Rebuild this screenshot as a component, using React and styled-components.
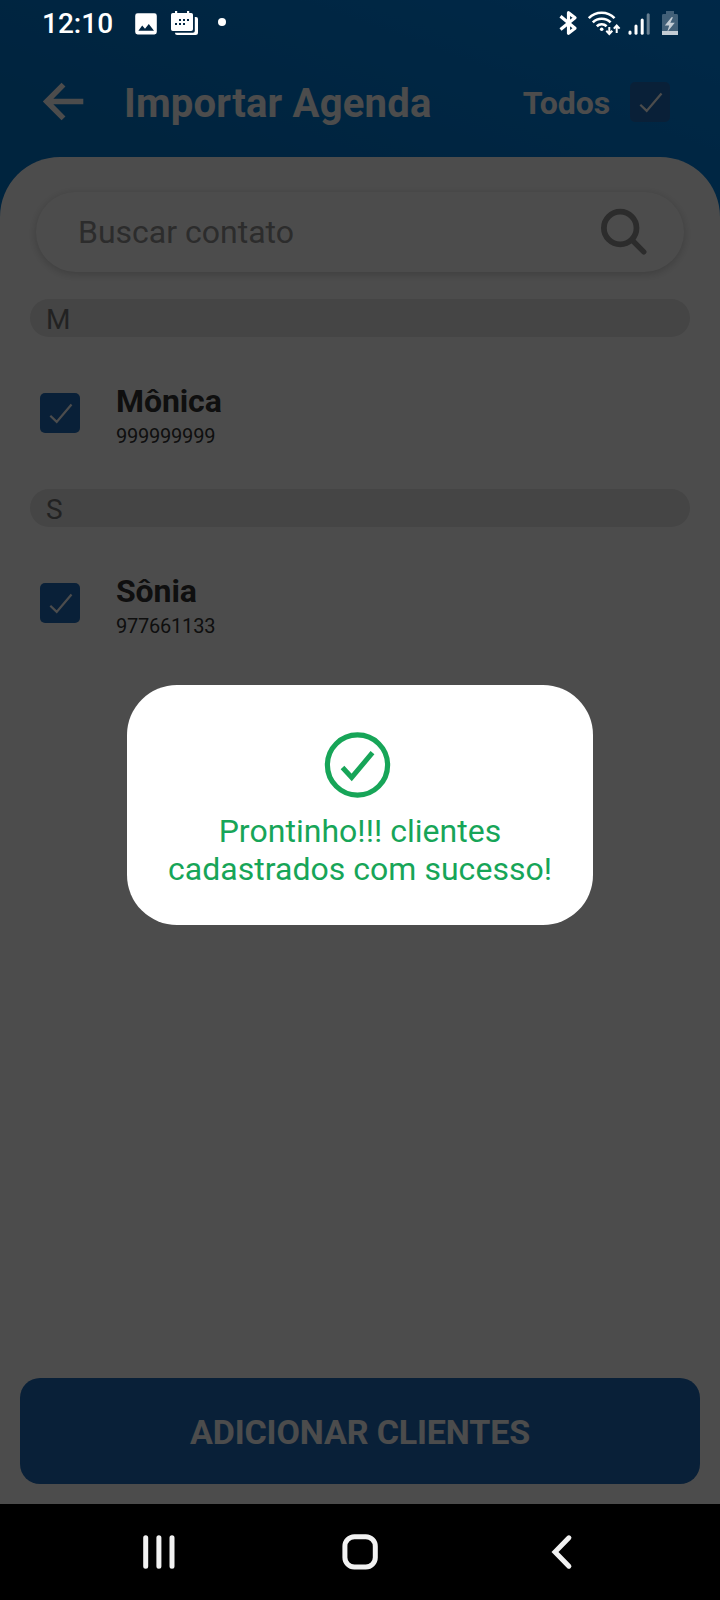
import React, { useState } from "react";
import styled, { createGlobalStyle } from "styled-components";

const GlobalStyle = createGlobalStyle`
  * {
    box-sizing: border-box;
  }

  body {
    margin: 0;
    font-family: Roboto, "Liberation Sans", sans-serif;
    background-color: #000000;
  }
`;

const contactGroups = [
  { letter: "M", contacts: [{ name: "Mônica", phone: "999999999" }] },
  { letter: "S", contacts: [{ name: "Sônia", phone: "977661133" }] },
];

const CheckBox = ({ checked, onClick }) => (
  <CheckBoxButton onClick={onClick}>
    {checked && (
      <svg width="40" height="40" viewBox="0 0 40 40" fill="none">
        <path d="M10.3 22.8L16.7 28.9L31.5 11.5" stroke="#fff" strokeWidth="2.2" />
      </svg>
    )}
  </CheckBoxButton>
);

const StatusBar = () => (
  <StatusContainer>
    <Clock>12:10</Clock>
    <svg width="92" height="26" viewBox="0 0 92 26" fill="#fff">
      <path
        fillRule="evenodd"
        d="M2.6 3.3H19.4A2.4 2.4 0 0 1 21.8 5.7V22.1A2.4 2.4 0 0 1 19.4 24.5H2.6A2.4 2.4 0 0 1 .2 22.1V5.7A2.4 2.4 0 0 1 2.6 3.3ZM3.4 20.8H19L13.8 14L10 18.8L7.2 15.6Z"
      />
      <path
        fillRule="evenodd"
        d="M38 3H40V1H42.2V3H52V1H54.2V3H56.2A1.8 1.8 0 0 1 58 4.8V19.2A1.8 1.8 0 0 1 56.2 21H37.8A1.8 1.8 0 0 1 36 19.2V4.8A1.8 1.8 0 0 1 37.8 3ZM44 9V11H46V9ZM48 9V11H50V9ZM52 9V11H54V9ZM40 13V15H42V13ZM44 13V15H46V13ZM48 13V15H50V13Z"
      />
      <path d="M59.8 7H61A2 2 0 0 1 63 9V22.5A2.5 2.5 0 0 1 60.5 25H42A2 2 0 0 1 40 23V22.8H58A1.8 1.8 0 0 0 59.8 21Z" />
      <circle cx="87" cy="12" r="4" />
    </svg>
    <Spacer />
    <svg width="122" height="28" viewBox="0 0 122 28" fill="none" stroke="#fff">
      <path d="M2.5 7.2L17 19.3L10.5 24.3V3.7L17 8.7L2.5 20.5" strokeWidth="3.2" strokeLinejoin="round" />
      <g strokeWidth="2.6">
        <path d="M30.8 9.2A18 18 0 0 1 56.5 9.2" />
        <path d="M34.8 13.4A12.6 12.6 0 0 1 52.6 13.4" />
        <path d="M38.8 17.2A7 7 0 0 1 48.6 17.2" />
      </g>
      <circle cx="43.7" cy="20.3" r="1.8" fill="#fff" stroke="none" />
      <path d="M51.3 18V25M48.3 21.8L51.3 25L54.3 21.8M58.7 24V17M55.8 19.6L58.7 16.5L61.6 19.6" strokeWidth="2" />
      <g strokeWidth="3" strokeLinecap="round">
        <path d="M72 23V24.3" />
        <path d="M78 17V24.3" />
        <path d="M84.2 11V24.3" />
        <path d="M90.2 5.7V24.3" opacity=".4" />
      </g>
      <g stroke="none">
        <path d="M108 2H116V5H118.6A1.4 1.4 0 0 1 120 6.4V22H104V6.4A1.4 1.4 0 0 1 105.4 5H108Z" fill="#426078" />
        <path d="M104 22H120V26H104Z" fill="#c3ccd4" />
        <path d="M113.5 8.3L106.8 16.6H111.2L109.2 23L116.8 13.8H112.3L115 8.3Z" fill="#c3ccd4" />
      </g>
    </svg>
  </StatusContainer>
);

const NavBar = () => (
  <NavContainer>
    <NavButton>
      <svg width="36" height="40" viewBox="0 0 36 40" stroke="#f2f2f2" strokeWidth="5" strokeLinecap="round">
        <path d="M5.7 5.8V34.2M18.9 5.8V34.2M32 5.8V34.2" />
      </svg>
    </NavButton>
    <NavButton>
      <svg width="40" height="40" viewBox="0 0 40 40" fill="none" stroke="#f2f2f2" strokeWidth="5">
        <rect x="4.9" y="4.8" width="30.4" height="30.2" rx="9.5" />
      </svg>
    </NavButton>
    <NavButton>
      <svg width="36" height="40" viewBox="0 0 36 40" fill="none" stroke="#f2f2f2" strokeWidth="5" strokeLinecap="round">
        <path d="M24.9 5.8L11 20L24.9 34.2" />
      </svg>
    </NavButton>
  </NavContainer>
);

const App = () => {
  const [unselected, setUnselected] = useState([]);

  const toggleContact = (phone) => {
    setUnselected(
      unselected.includes(phone)
        ? unselected.filter((item) => item !== phone)
        : [...unselected, phone]
    );
  };

  const toggleAll = () => {
    const phones = contactGroups.flatMap((group) => group.contacts.map((contact) => contact.phone));
    setUnselected(unselected.length === 0 ? phones : []);
  };

  return (
    <>
      <GlobalStyle />
      <Screen>
        <Page>
          <StatusBar />
          <Header>
            <svg width="44" height="40" viewBox="0 0 44 40" fill="none" stroke="#fff" strokeWidth="5.5">
              <path d="M21.5 2.6L4.7 19.5L21.5 36.4M4.7 19.5H41.3" />
            </svg>
            <Title>Importar Agenda</Title>
            <SelectAll>Todos</SelectAll>
            <CheckBox checked={unselected.length === 0} onClick={toggleAll} />
          </Header>
          <Sheet>
            <SearchBar>
              <input placeholder="Buscar contato" />
              <svg width="48" height="48" viewBox="0 0 48 48" fill="none" stroke="#949494">
                <circle cx="20.2" cy="20" r="16.3" strokeWidth="5.8" />
                <path d="M32.5 32.5L43.8 43.8" strokeWidth="5.4" strokeLinecap="round" />
              </svg>
            </SearchBar>
            <ContactList>
              {contactGroups.map((group) => (
                <div key={group.letter}>
                  <GroupLetter>{group.letter}</GroupLetter>
                  {group.contacts.map((contact) => (
                    <ContactRow key={contact.phone}>
                      <CheckBox
                        checked={!unselected.includes(contact.phone)}
                        onClick={() => toggleContact(contact.phone)}
                      />
                      <ContactInfo>
                        <h3>{contact.name}</h3>
                        <span>{contact.phone}</span>
                      </ContactInfo>
                    </ContactRow>
                  ))}
                </div>
              ))}
            </ContactList>
            <AddButton>ADICIONAR CLIENTES</AddButton>
          </Sheet>
          <Overlay>
            <Modal>
              <svg width="80" height="80" viewBox="0 0 80 80" fill="none" stroke="#17a558">
                <circle cx="37.5" cy="40" r="30.1" strokeWidth="5.2" />
                <path d="M22.5 42.5L31.7 52.4L52.5 27.7" strokeWidth="5" />
              </svg>
              <p>Prontinho!!! clientes cadastrados com sucesso!</p>
            </Modal>
          </Overlay>
        </Page>
        <NavBar />
      </Screen>
    </>
  );
};

export default App;

const Screen = styled.div`
  display: grid;
  grid-template-rows: 1504px 96px;
  width: 720px;
  height: 1600px;
  overflow: hidden;
`;

const Page = styled.div`
  position: relative;
  display: flex;
  flex-direction: column;
  background: linear-gradient(200deg, #0088f0 0px, #0078d0 330px, #007ad8 100%);
`;

const StatusContainer = styled.div`
  position: relative;
  z-index: 2;
  display: flex;
  align-items: center;
  height: 46px;
  padding: 0 40px 0 42px;

  svg {
    margin-bottom: 1px;
  }
`;

const Clock = styled.span`
  width: 93px;
  color: #FFFFFF;
  font-size: 28px;
  font-weight: 500;
`;

const Spacer = styled.div`
  flex: 1;
`;

const Header = styled.div`
  display: flex;
  align-items: center;
  height: 111px;
  padding: 0 50px 0 42px;
  color: #FFFFFF;
`;

const Title = styled.h1`
  flex: 1;
  margin: 4px 0 0 38px;
  font-size: 40px;
  font-weight: 700;
  letter-spacing: .22px;
`;

const SelectAll = styled.span`
  margin: 2px 20px 0 0;
  font-size: 32px;
  font-weight: 700;
  letter-spacing: -.1px;
`;

const CheckBoxButton = styled.button`
  display: flex;
  width: 40px;
  height: 40px;
  padding: 0;
  border: none;
  border-radius: 5px;
  background-color: #216dbb;
  cursor: pointer;
`;

const Sheet = styled.div`
  flex: 1;
  display: flex;
  flex-direction: column;
  padding: 35px 20px 20px;
  border-radius: 60px 60px 0 0;
  background-color: #FFFFFF;
`;

const SearchBar = styled.div`
  display: flex;
  align-items: center;
  height: 80px;
  margin: 0 16px;
  padding: 0 36px 0 42px;
  border-radius: 40px;
  background-color: #FFFFFF;
  box-shadow: 0 2px 10px rgba(0, 0, 0, .2);

  input {
    flex: 1;
    min-width: 0;
    padding: 0;
    border: none;
    outline: none;
    background: transparent;
    font-family: inherit;
    font-size: 32px;

    &::placeholder {
      color: #949494;
      opacity: 1;
    }
  }
`;

const ContactList = styled.div`
  flex: 1;
  padding: 27px 10px 0;
`;

const GroupLetter = styled.div`
  height: 38px;
  padding: 2px 16px 0;
  border-radius: 19px;
  background-color: #e6e6e6;
  color: #747474;
  font-size: 28px;
  line-height: 38px;
`;

const ContactRow = styled.div`
  display: flex;
  align-items: center;
  gap: 36px;
  height: 152px;
  padding: 0 10px;
`;

const ContactInfo = styled.div`
  display: flex;
  flex-direction: column;
  gap: 4px;
  padding-top: 4px;

  h3 {
    margin: 0;
    color: #333333;
    font-size: 32px;
    font-weight: 700;
    line-height: 38px;
    letter-spacing: -.1px;
  }

  span {
    color: #333333;
    font-size: 20px;
    line-height: 24px;
    letter-spacing: -.22px;
  }
`;

const AddButton = styled.button`
  height: 106px;
  padding: 2px 0 0;
  border: none;
  border-radius: 20px;
  background-color: #216dbb;
  color: #FFFFFF;
  font-family: inherit;
  font-size: 34px;
  font-weight: 700;
  letter-spacing: -.12px;
  cursor: pointer;
`;

const Overlay = styled.div`
  position: absolute;
  inset: 0;
  z-index: 1;
  display: flex;
  justify-content: center;
  align-items: center;
  padding-top: 106px;
  background-color: rgba(0, 0, 0, .7);
`;

const Modal = styled.div`
  display: flex;
  flex-direction: column;
  align-items: center;
  width: 466px;
  height: 240px;
  padding: 40px 30px 0;
  border-radius: 50px;
  background-color: #FFFFFF;

  p {
    margin: 7px 0 0;
    color: #17a558;
    font-size: 32px;
    line-height: 38px;
    letter-spacing: .03px;
    text-align: center;
  }
`;

const NavContainer = styled.div`
  display: flex;
  justify-content: center;
  align-items: center;
  gap: 164px;
  background-color: #000000;
`;

const NavButton = styled.button`
  display: flex;
  padding: 0;
  border: none;
  background: none;
  cursor: pointer;
`;
